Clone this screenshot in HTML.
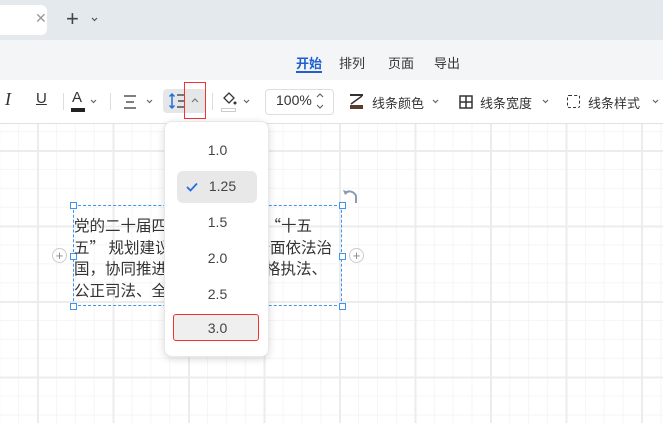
<!DOCTYPE html><html><head><meta charset="utf-8"><style>
*{margin:0;padding:0;box-sizing:border-box}
body{width:663px;height:423px;overflow:hidden;position:relative;font-family:"Liberation Sans","Noto Sans CJK SC",sans-serif;background:#fff;color:#333}
.tabs{position:absolute;left:0;top:0;width:663px;height:40px;background:#e3e9ed}
.tab{position:absolute;left:-10px;top:5px;width:57px;height:30px;background:#fff;border-radius:0 6px 6px 0}
.menu{position:absolute;top:40px;left:0;width:663px;height:40px;background:#f4f5f6}
.menu span{position:absolute;top:13px;font-size:13px;color:#333}
.tb{position:absolute;top:80px;left:0;width:663px;height:44px;background:#fff;border-bottom:1px solid #e2e2e2;font-size:13px}
.tb .t{position:absolute;top:13px}
.cv{position:absolute;top:19px}
.canvas{position:absolute;top:124px;left:0;width:663px;height:299px;background-color:#fff;
background-image:linear-gradient(#ececec 2px,transparent 2px),linear-gradient(90deg,#ececec 2px,transparent 2px),linear-gradient(#f5f5f5 1px,transparent 1px),linear-gradient(90deg,#f5f5f5 1px,transparent 1px);
background-size:75.5px 75.5px,75.5px 75.5px,18.9px 18.9px,18.9px 18.9px;background-position:37px 26px,37px 26px,37px 26px,37px 26px}
.sel{position:absolute;left:73px;top:205px;width:269px;height:101px;border:1px dashed #3e95f0}
.h{position:absolute;width:7px;height:7px;background:#fff;border:1px solid #3e95f0}
.w{position:absolute;font-size:15.5px;line-height:21.5px;color:#333;white-space:nowrap;font-family:"Noto Sans CJK SC",sans-serif}
.dd{position:absolute;left:164px;top:121px;width:105px;height:236px;background:#fff;border-radius:8px;box-shadow:0 2px 8px rgba(0,0,0,.15);border:1px solid #e8e8e8}
.dd div{position:absolute;left:0;width:105px;text-align:center;font-size:14px;color:#444}
</style></head><body>
<div class="tabs"><div class="tab"><span style="position:absolute;left:45px;top:5px;color:#999;font-size:14px">✕</span></div>
<span style="position:absolute;left:66px;top:6px;font-size:22px;color:#444">+</span>
<svg style="position:absolute;left:91px;top:17px" width="7" height="5"><path d="M1 1L3.5 3.5L6 1" stroke="#555" fill="none" stroke-width="1.2"/></svg></div>
<div class="menu"><span style="left:296px;color:#1f5fd0;font-weight:bold">开始</span><div style="position:absolute;left:296px;top:31px;width:26px;height:2px;background:#1f5fd0"></div>
<span style="left:339px">排列</span><span style="left:388px">页面</span><span style="left:434px">导出</span></div>
<div class="tb">
<span class="t" style="left:5px;font-style:italic;font-family:'Liberation Serif';font-size:18px;top:9px">I</span>
<span class="t" style="left:36px;text-decoration:underline;font-size:15px;top:10px">U</span>
<div style="position:absolute;left:63px;top:13px;width:1px;height:17px;background:#ddd"></div>
<span class="t" style="left:72px;font-size:15px;top:9px">A</span><div style="position:absolute;left:71px;top:28px;width:14px;height:4px;background:#222"></div>
<svg class="cv" style="left:90px" width="7" height="5"><path d="M1 1L3.5 3.5L6 1" stroke="#666" fill="none" stroke-width="1.2"/></svg>
<div style="position:absolute;left:110px;top:13px;width:1px;height:17px;background:#ddd"></div>
<svg style="position:absolute;left:123px;top:15px" width="14" height="14"><path d="M1 1H13M3 7H11M1 13H13" stroke="#333" stroke-width="1.3"/></svg>
<svg class="cv" style="left:146px" width="7" height="5"><path d="M1 1L3.5 3.5L6 1" stroke="#666" fill="none" stroke-width="1.2"/></svg>
<div style="position:absolute;left:163px;top:9px;width:43px;height:24px;background:#e4e6e8;border-radius:4px"></div>
<svg style="position:absolute;left:168px;top:12px" width="18" height="18"><path d="M4 2V16M1.5 4.5L4 2L6.5 4.5M1.5 13.5L4 16L6.5 13.5" stroke="#1f6fe0" fill="none" stroke-width="1.5"/><path d="M9 3H17M10 9H16M9 15H17" stroke="#333" stroke-width="1.3"/></svg>
<div style="position:absolute;left:184px;top:2px;width:22px;height:37px;border:1.5px solid #e33"></div>
<svg style="position:absolute;left:191px;top:18px" width="8" height="5"><path d="M1 4L4 1L7 4" stroke="#777" fill="none" stroke-width="1.2"/></svg>
<div style="position:absolute;left:212px;top:13px;width:1px;height:17px;background:#ddd"></div>
<svg style="position:absolute;left:221px;top:12px" width="16" height="14"><path d="M3 6L8 1L13 6L8 11Z" stroke="#333" fill="none" stroke-width="1.3"/><circle cx="14" cy="11" r="1.5" fill="#333"/></svg>
<div style="position:absolute;left:221px;top:28px;width:15px;height:4px;border:1px solid #ccc"></div>
<svg class="cv" style="left:243px" width="7" height="5"><path d="M1 1L3.5 3.5L6 1" stroke="#666" fill="none" stroke-width="1.2"/></svg>
<div style="position:absolute;left:265px;top:9px;width:69px;height:26px;border:1px solid #ddd;border-radius:4px"></div>
<span class="t" style="left:276px;font-size:14px;top:12px">100%</span>
<svg style="position:absolute;left:316px;top:13px" width="8" height="16"><path d="M1 4L4 1L7 4M1 12L4 15L7 12" stroke="#666" fill="none" stroke-width="1.2"/></svg>
<div style="position:absolute;left:350px;top:14px;width:13px;height:2px;background:#333"></div><div style="position:absolute;left:350px;top:25px;width:13px;height:4px;background:#5a3c2c"></div>
<svg style="position:absolute;left:350px;top:15px" width="13" height="10"><path d="M12 1L1 9" stroke="#333" stroke-width="1.5"/></svg>
<span class="t" style="left:372px">线条颜色</span>
<svg class="cv" style="left:432px" width="7" height="5"><path d="M1 1L3.5 3.5L6 1" stroke="#666" fill="none" stroke-width="1.2"/></svg>
<svg style="position:absolute;left:459px;top:15px" width="14" height="14"><rect x="1" y="1" width="12" height="12" stroke="#333" fill="none" stroke-width="1.5"/><path d="M7 1V13M1 7H13" stroke="#333" stroke-width="1.5"/></svg>
<span class="t" style="left:480px">线条宽度</span>
<svg class="cv" style="left:542px" width="7" height="5"><path d="M1 1L3.5 3.5L6 1" stroke="#666" fill="none" stroke-width="1.2"/></svg>
<div style="position:absolute;left:567px;top:15px;width:13px;height:13px;border:1.5px dashed #333;border-radius:2px"></div>
<span class="t" style="left:588px">线条样式</span>
<svg class="cv" style="left:652px" width="7" height="5"><path d="M1 1L3.5 3.5L6 1" stroke="#666" fill="none" stroke-width="1.2"/></svg>
</div>
<div class="canvas"></div>
<div class="sel"></div>
<div class="h" style="left:70px;top:202px"></div><div class="h" style="left:339px;top:202px"></div><div class="h" style="left:70px;top:303px"></div><div class="h" style="left:339px;top:303px"></div><div class="h" style="left:70px;top:253px"></div><div class="h" style="left:339px;top:253px"></div>
<span style="position:absolute;left:52px;top:248px;width:15px;height:15px;border:1px solid #ccc;border-radius:50%;font-size:13px;line-height:13px;text-align:center;color:#888">+</span>
<span style="position:absolute;left:349px;top:248px;width:15px;height:15px;border:1px solid #ccc;border-radius:50%;font-size:13px;line-height:13px;text-align:center;color:#888">+</span>
<svg style="position:absolute;left:342px;top:187px" width="18" height="18"><path d="M3 6A7 7 0 0 1 14 9L14 16" stroke="#8a9bb3" fill="none" stroke-width="2"/><path d="M1 3L3 8L7 5Z" fill="#8a9bb3"/></svg>
<span class="w" style="left:74px;top:215px">党的二十届四中全会</span>
<span class="w" style="right:351px;top:215px">通过“十五</span>
<span class="w" style="left:74px;top:237px">五” 规划建议，提出全</span>
<span class="w" style="right:331px;top:237px">出全面依法治</span>
<span class="w" style="left:74px;top:258px">国，协同推进科学</span>
<span class="w" style="right:336px;top:258px">、严格执法、</span>
<span class="w" style="left:74px;top:280px">公正司法、全民守法</span>
<div class="dd">
<div style="top:20px">1.0</div>
<div style="left:12px;top:49px;width:80px;height:32px;background:#e8e8e8;border-radius:6px"></div>
<div style="top:56px;padding-left:10px">1.25</div>
<svg style="position:absolute;left:21px;top:60px" width="12" height="10"><path d="M1 5L4.5 8.5L11 1.5" stroke="#1f6fe0" fill="none" stroke-width="1.8"/></svg>
<div style="top:92px">1.5</div><div style="top:128px">2.0</div><div style="top:164px">2.5</div>
<div style="left:8px;top:192px;width:86px;height:27px;background:#efefef;border:1.5px solid #e33;border-radius:3px"></div>
<div style="top:198px">3.0</div>
</div>
</body></html>
